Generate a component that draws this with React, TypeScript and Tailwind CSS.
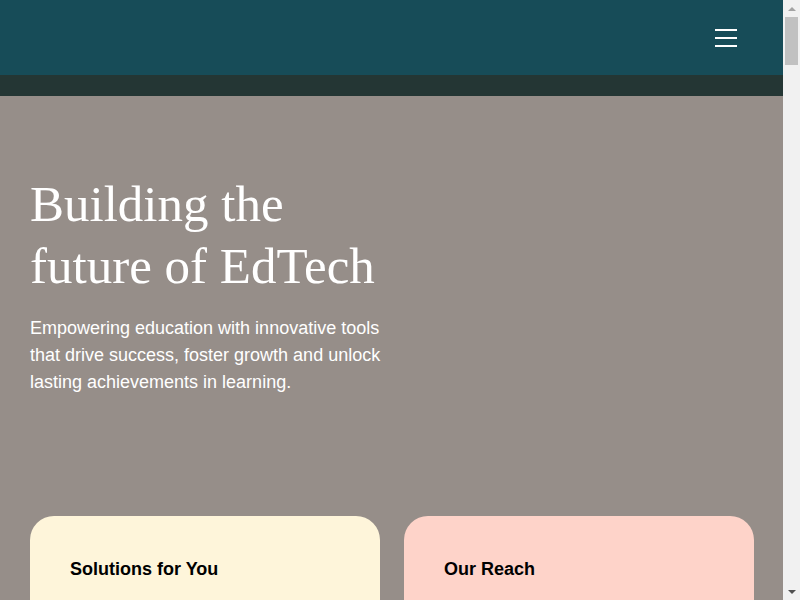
import React from 'react';

const solutions = [
  'Learning management platforms',
  'Assessment and analytics tools',
  'Content authoring for educators',
  'Student engagement apps',
];

const reach = [
  { value: '12M+', label: 'Learners supported worldwide' },
  { value: '40K', label: 'Schools and institutions' },
  { value: '85', label: 'Countries served' },
];

const stories = [
  {
    title: 'Personalised learning at scale',
    body: 'Adaptive pathways help every learner progress at their own pace, with teachers kept in the loop through clear, actionable insight.',
    color: 'bg-[#fef5da]',
  },
  {
    title: 'Assessment that informs teaching',
    body: 'Formative and summative assessment tools that turn results into next steps for classrooms, schools and districts.',
    color: 'bg-[#fed3c9]',
  },
  {
    title: 'Content built with educators',
    body: 'Curriculum-aligned resources designed alongside teachers, tested in real classrooms and continually improved.',
    color: 'bg-[#d9e8e3]',
  },
  {
    title: 'Data you can trust',
    body: 'Privacy-first infrastructure and transparent reporting so institutions can make confident decisions.',
    color: 'bg-[#fef5da]',
  },
  {
    title: 'Partnerships that last',
    body: 'We work with ministries, universities and schools over the long term to deliver lasting outcomes.',
    color: 'bg-[#fed3c9]',
  },
  {
    title: 'Careers in EdTech',
    body: 'Join a team of engineers, researchers and former educators building tools that matter.',
    color: 'bg-[#d9e8e3]',
  },
];

const Header: React.FC = () => (
  <header>
    <div className="flex h-[75px] items-center justify-end bg-[#174c58] pr-[46px] shadow-[0_1px_2px_rgba(0,0,0,0.25)]">
      <button type="button" className="flex w-[22px] flex-col gap-[6px]">
        <span className="sr-only">Open menu</span>
        <span className="block h-[2px] w-[22px] bg-white" />
        <span className="block h-[2px] w-[22px] bg-white" />
        <span className="block h-[2px] w-[22px] bg-white" />
      </button>
    </div>
    <div className="h-[21px] bg-[#243634]" />
  </header>
);

// classic window scrollbar, as the page shows it
const Scrollbar: React.FC = () => (
  <div className="flex w-[17px] shrink-0 flex-col items-center bg-[#f1f1f1]">
    <div className="flex h-[17px] w-full items-center justify-center">
      <div className="h-0 w-0 border-x-[4px] border-b-[4px] border-x-transparent border-b-[#a3a3a3]" />
    </div>
    <div className="h-[48px] w-[13px] bg-[#c1c1c1]" />
    <div className="flex-1" />
    <div className="flex h-[17px] w-full items-center justify-center">
      <div className="h-0 w-0 border-x-[4px] border-t-[4px] border-x-transparent border-t-[#505050]" />
    </div>
  </div>
);

export default function App() {
  return (
    <div className="flex h-screen font-['Liberation_Sans',Arial,sans-serif]">
      <div className="flex-1 overflow-y-auto bg-[#968e89] text-white [scrollbar-width:none]">
        <Header />

        {/* Hero */}
        <section className="px-[30px] pt-[77px]">
          <h1 className="font-['Liberation_Serif','Times_New_Roman',serif] text-[51px] leading-[62px] font-normal">
            Building the
            <br />
            future of EdTech
          </h1>
          <p className="mt-[18px] max-w-[360px] text-[18px] leading-[27px]">
            Empowering education with innovative tools that drive success, foster growth and unlock lasting achievements in learning.
          </p>
        </section>

        {/* Cards */}
        <section className="mt-[120px] grid grid-cols-2 gap-[24px] pr-[29px] pl-[30px] text-black">
          <div className="rounded-[24px] bg-[#fef5da] px-[40px] pt-[40px] pb-[48px]">
            <h2 className="text-[18px] leading-[27px] font-bold">Solutions for You</h2>
            <p className="mt-4 text-[15px] leading-[24px] text-[#333]">
              Tools for teachers, learners and institutions, designed to work together.
            </p>
            <ul className="mt-6 space-y-4">
              {solutions.map((s) => (
                <li key={s} className="border-t border-black/15 pt-4 text-[15px]">
                  {s}
                </li>
              ))}
            </ul>
            <a href="#" className="mt-8 inline-block text-[15px] font-bold underline">
              Explore solutions
            </a>
          </div>
          <div className="rounded-[24px] bg-[#fed3c9] px-[40px] pt-[40px] pb-[48px]">
            <h2 className="text-[18px] leading-[27px] font-bold">Our Reach</h2>
            <p className="mt-4 text-[15px] leading-[24px] text-[#333]">
              Trusted by learners and educators across the globe.
            </p>
            <div className="mt-6 space-y-6">
              {reach.map((r) => (
                <div key={r.label} className="border-t border-black/15 pt-4">
                  <div className="text-[32px] leading-[40px] font-bold">{r.value}</div>
                  <div className="text-[15px] text-[#333]">{r.label}</div>
                </div>
              ))}
            </div>
          </div>
        </section>

        {/* Stories */}
        <section className="px-[30px] pt-[140px]">
          <h2 className="font-['Liberation_Serif','Times_New_Roman',serif] text-[40px] leading-[50px]">
            What we do
          </h2>
          <div className="mt-[60px] flex flex-col gap-[60px] text-black">
            {stories.map((s) => (
              <div key={s.title} className={`rounded-[24px] ${s.color} px-[40px] py-[60px]`}>
                <h3 className="text-[24px] leading-[32px] font-bold">{s.title}</h3>
                <p className="mt-5 max-w-[520px] text-[17px] leading-[27px] text-[#333]">{s.body}</p>
                <div className="mt-10 h-[320px] rounded-[16px] bg-black/5" />
                <a href="#" className="mt-8 inline-block text-[15px] font-bold underline">
                  Learn more
                </a>
              </div>
            ))}
          </div>
        </section>

        {/* Contact */}
        <section className="px-[30px] py-[160px]">
          <h2 className="font-['Liberation_Serif','Times_New_Roman',serif] text-[40px] leading-[50px]">
            Let&apos;s build together
          </h2>
          <p className="mt-5 max-w-[420px] text-[18px] leading-[27px]">
            Talk to our team about partnerships, pilots and bringing our tools to your institution.
          </p>
          <a href="#" className="mt-10 inline-block rounded-full bg-white px-8 py-4 text-[16px] font-bold text-[#174c58]">
            Get in touch
          </a>
        </section>

        <footer className="bg-[#174c58] px-[30px] py-[80px] text-[15px]">
          <div className="grid grid-cols-3 gap-8">
            <div className="space-y-3">
              <div className="font-bold">Company</div>
              <div>About</div>
              <div>Careers</div>
              <div>News</div>
            </div>
            <div className="space-y-3">
              <div className="font-bold">Solutions</div>
              <div>Schools</div>
              <div>Higher education</div>
              <div>Workforce</div>
            </div>
            <div className="space-y-3">
              <div className="font-bold">Support</div>
              <div>Help centre</div>
              <div>Privacy</div>
              <div>Contact</div>
            </div>
          </div>
          <div className="mt-[80px] border-t border-white/20 pt-6 text-white/70">© EdTech. All rights reserved.</div>
        </footer>
      </div>
      <Scrollbar />
    </div>
  );
}
